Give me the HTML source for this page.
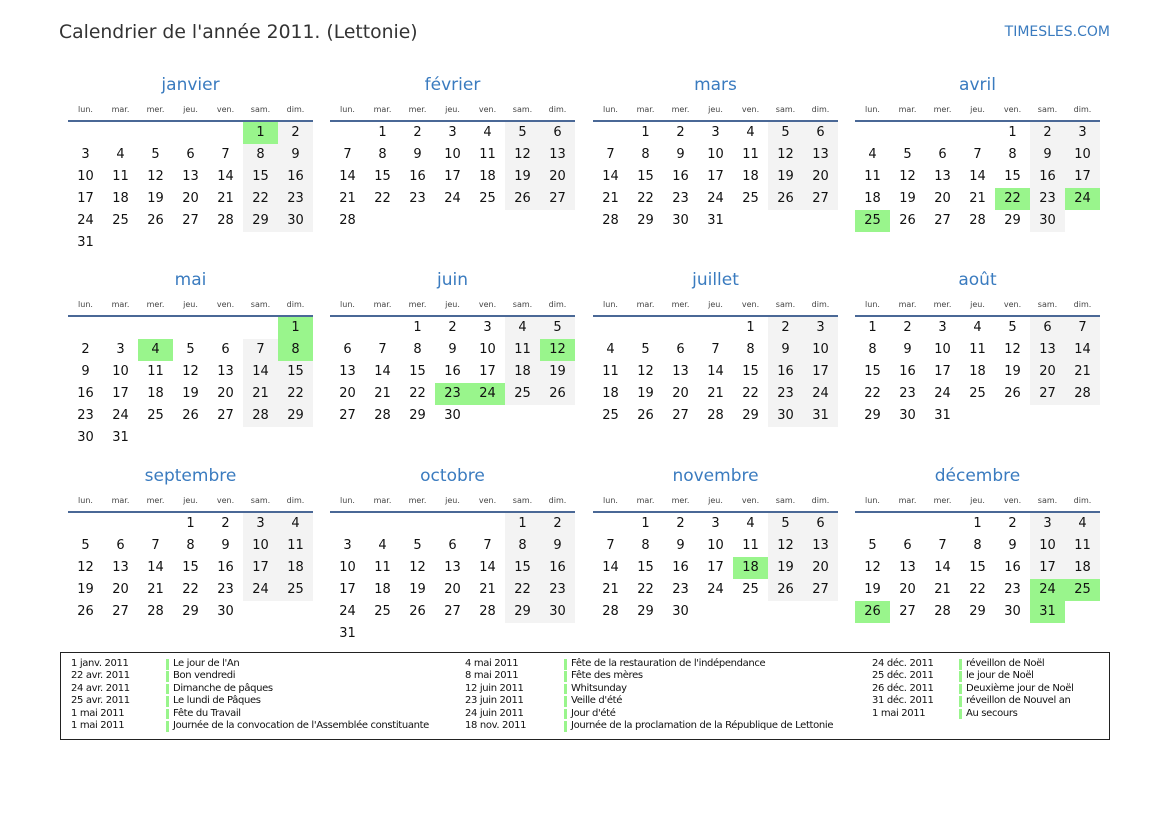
<!DOCTYPE html>
<html><head><meta charset="utf-8"><style>
body{margin:0;width:1169px;height:827px;background:#fff;font-family:"DejaVu Sans","Liberation Sans",sans-serif;position:relative;overflow:hidden;color:#111}
.t{position:absolute;left:59px;top:22px;font-size:18.8px;color:#333}
.s{position:absolute;right:59px;top:24px;font-size:14px;color:#3a7bbf}
.m{position:absolute;width:245px}
.m h2{margin:0;height:27px;line-height:27px;font-size:17px;font-weight:normal;color:#3a7bbf;text-align:center}
table{border-collapse:collapse;table-layout:fixed;width:245px}
td{width:35px;height:22px;padding:0;text-align:center;font-size:13px;line-height:22px}
tr.h td{height:21px;font-size:8px;color:#444;line-height:21px;border-bottom:2px solid #4a6896}
td.w{background:#f3f3f3}
td.g{background:#99f58c}
.lg{position:absolute;left:60px;top:652px;width:1048px;height:86px;border:1px solid #222;font-size:10px;color:#111;letter-spacing:-0.35px}
.c{position:absolute;top:5px;line-height:12.4px;white-space:nowrap}
.b{padding-left:7px}
.b span{position:relative;display:block}
.b span:before{content:"";position:absolute;left:-7px;top:1px;width:3px;height:10.5px;background:#99f58c}
</style></head><body>
<div class="t">Calendrier de l'année 2011. (Lettonie)</div>
<div class="s">TIMESLES.COM</div>

<div class="m" style="left:68px;top:72px"><h2>janvier</h2><table>
<tr class="h"><td>lun.</td><td>mar.</td><td>mer.</td><td>jeu.</td><td>ven.</td><td>sam.</td><td>dim.</td></tr>
<tr><td></td><td></td><td></td><td></td><td></td><td class="g">1</td><td class="w">2</td></tr>
<tr><td>3</td><td>4</td><td>5</td><td>6</td><td>7</td><td class="w">8</td><td class="w">9</td></tr>
<tr><td>10</td><td>11</td><td>12</td><td>13</td><td>14</td><td class="w">15</td><td class="w">16</td></tr>
<tr><td>17</td><td>18</td><td>19</td><td>20</td><td>21</td><td class="w">22</td><td class="w">23</td></tr>
<tr><td>24</td><td>25</td><td>26</td><td>27</td><td>28</td><td class="w">29</td><td class="w">30</td></tr>
<tr><td>31</td><td></td><td></td><td></td><td></td><td></td><td></td></tr></table></div>

<div class="m" style="left:330px;top:72px"><h2>février</h2><table>
<tr class="h"><td>lun.</td><td>mar.</td><td>mer.</td><td>jeu.</td><td>ven.</td><td>sam.</td><td>dim.</td></tr>
<tr><td></td><td>1</td><td>2</td><td>3</td><td>4</td><td class="w">5</td><td class="w">6</td></tr>
<tr><td>7</td><td>8</td><td>9</td><td>10</td><td>11</td><td class="w">12</td><td class="w">13</td></tr>
<tr><td>14</td><td>15</td><td>16</td><td>17</td><td>18</td><td class="w">19</td><td class="w">20</td></tr>
<tr><td>21</td><td>22</td><td>23</td><td>24</td><td>25</td><td class="w">26</td><td class="w">27</td></tr>
<tr><td>28</td><td></td><td></td><td></td><td></td><td></td><td></td></tr></table></div>

<div class="m" style="left:593px;top:72px"><h2>mars</h2><table>
<tr class="h"><td>lun.</td><td>mar.</td><td>mer.</td><td>jeu.</td><td>ven.</td><td>sam.</td><td>dim.</td></tr>
<tr><td></td><td>1</td><td>2</td><td>3</td><td>4</td><td class="w">5</td><td class="w">6</td></tr>
<tr><td>7</td><td>8</td><td>9</td><td>10</td><td>11</td><td class="w">12</td><td class="w">13</td></tr>
<tr><td>14</td><td>15</td><td>16</td><td>17</td><td>18</td><td class="w">19</td><td class="w">20</td></tr>
<tr><td>21</td><td>22</td><td>23</td><td>24</td><td>25</td><td class="w">26</td><td class="w">27</td></tr>
<tr><td>28</td><td>29</td><td>30</td><td>31</td><td></td><td></td><td></td></tr></table></div>

<div class="m" style="left:855px;top:72px"><h2>avril</h2><table>
<tr class="h"><td>lun.</td><td>mar.</td><td>mer.</td><td>jeu.</td><td>ven.</td><td>sam.</td><td>dim.</td></tr>
<tr><td></td><td></td><td></td><td></td><td>1</td><td class="w">2</td><td class="w">3</td></tr>
<tr><td>4</td><td>5</td><td>6</td><td>7</td><td>8</td><td class="w">9</td><td class="w">10</td></tr>
<tr><td>11</td><td>12</td><td>13</td><td>14</td><td>15</td><td class="w">16</td><td class="w">17</td></tr>
<tr><td>18</td><td>19</td><td>20</td><td>21</td><td class="g">22</td><td class="w">23</td><td class="g">24</td></tr>
<tr><td class="g">25</td><td>26</td><td>27</td><td>28</td><td>29</td><td class="w">30</td><td></td></tr></table></div>

<div class="m" style="left:68px;top:267px"><h2>mai</h2><table>
<tr class="h"><td>lun.</td><td>mar.</td><td>mer.</td><td>jeu.</td><td>ven.</td><td>sam.</td><td>dim.</td></tr>
<tr><td></td><td></td><td></td><td></td><td></td><td></td><td class="g">1</td></tr>
<tr><td>2</td><td>3</td><td class="g">4</td><td>5</td><td>6</td><td class="w">7</td><td class="g">8</td></tr>
<tr><td>9</td><td>10</td><td>11</td><td>12</td><td>13</td><td class="w">14</td><td class="w">15</td></tr>
<tr><td>16</td><td>17</td><td>18</td><td>19</td><td>20</td><td class="w">21</td><td class="w">22</td></tr>
<tr><td>23</td><td>24</td><td>25</td><td>26</td><td>27</td><td class="w">28</td><td class="w">29</td></tr>
<tr><td>30</td><td>31</td><td></td><td></td><td></td><td></td><td></td></tr></table></div>

<div class="m" style="left:330px;top:267px"><h2>juin</h2><table>
<tr class="h"><td>lun.</td><td>mar.</td><td>mer.</td><td>jeu.</td><td>ven.</td><td>sam.</td><td>dim.</td></tr>
<tr><td></td><td></td><td>1</td><td>2</td><td>3</td><td class="w">4</td><td class="w">5</td></tr>
<tr><td>6</td><td>7</td><td>8</td><td>9</td><td>10</td><td class="w">11</td><td class="g">12</td></tr>
<tr><td>13</td><td>14</td><td>15</td><td>16</td><td>17</td><td class="w">18</td><td class="w">19</td></tr>
<tr><td>20</td><td>21</td><td>22</td><td class="g">23</td><td class="g">24</td><td class="w">25</td><td class="w">26</td></tr>
<tr><td>27</td><td>28</td><td>29</td><td>30</td><td></td><td></td><td></td></tr></table></div>

<div class="m" style="left:593px;top:267px"><h2>juillet</h2><table>
<tr class="h"><td>lun.</td><td>mar.</td><td>mer.</td><td>jeu.</td><td>ven.</td><td>sam.</td><td>dim.</td></tr>
<tr><td></td><td></td><td></td><td></td><td>1</td><td class="w">2</td><td class="w">3</td></tr>
<tr><td>4</td><td>5</td><td>6</td><td>7</td><td>8</td><td class="w">9</td><td class="w">10</td></tr>
<tr><td>11</td><td>12</td><td>13</td><td>14</td><td>15</td><td class="w">16</td><td class="w">17</td></tr>
<tr><td>18</td><td>19</td><td>20</td><td>21</td><td>22</td><td class="w">23</td><td class="w">24</td></tr>
<tr><td>25</td><td>26</td><td>27</td><td>28</td><td>29</td><td class="w">30</td><td class="w">31</td></tr></table></div>

<div class="m" style="left:855px;top:267px"><h2>août</h2><table>
<tr class="h"><td>lun.</td><td>mar.</td><td>mer.</td><td>jeu.</td><td>ven.</td><td>sam.</td><td>dim.</td></tr>
<tr><td>1</td><td>2</td><td>3</td><td>4</td><td>5</td><td class="w">6</td><td class="w">7</td></tr>
<tr><td>8</td><td>9</td><td>10</td><td>11</td><td>12</td><td class="w">13</td><td class="w">14</td></tr>
<tr><td>15</td><td>16</td><td>17</td><td>18</td><td>19</td><td class="w">20</td><td class="w">21</td></tr>
<tr><td>22</td><td>23</td><td>24</td><td>25</td><td>26</td><td class="w">27</td><td class="w">28</td></tr>
<tr><td>29</td><td>30</td><td>31</td><td></td><td></td><td></td><td></td></tr></table></div>

<div class="m" style="left:68px;top:463px"><h2>septembre</h2><table>
<tr class="h"><td>lun.</td><td>mar.</td><td>mer.</td><td>jeu.</td><td>ven.</td><td>sam.</td><td>dim.</td></tr>
<tr><td></td><td></td><td></td><td>1</td><td>2</td><td class="w">3</td><td class="w">4</td></tr>
<tr><td>5</td><td>6</td><td>7</td><td>8</td><td>9</td><td class="w">10</td><td class="w">11</td></tr>
<tr><td>12</td><td>13</td><td>14</td><td>15</td><td>16</td><td class="w">17</td><td class="w">18</td></tr>
<tr><td>19</td><td>20</td><td>21</td><td>22</td><td>23</td><td class="w">24</td><td class="w">25</td></tr>
<tr><td>26</td><td>27</td><td>28</td><td>29</td><td>30</td><td></td><td></td></tr></table></div>

<div class="m" style="left:330px;top:463px"><h2>octobre</h2><table>
<tr class="h"><td>lun.</td><td>mar.</td><td>mer.</td><td>jeu.</td><td>ven.</td><td>sam.</td><td>dim.</td></tr>
<tr><td></td><td></td><td></td><td></td><td></td><td class="w">1</td><td class="w">2</td></tr>
<tr><td>3</td><td>4</td><td>5</td><td>6</td><td>7</td><td class="w">8</td><td class="w">9</td></tr>
<tr><td>10</td><td>11</td><td>12</td><td>13</td><td>14</td><td class="w">15</td><td class="w">16</td></tr>
<tr><td>17</td><td>18</td><td>19</td><td>20</td><td>21</td><td class="w">22</td><td class="w">23</td></tr>
<tr><td>24</td><td>25</td><td>26</td><td>27</td><td>28</td><td class="w">29</td><td class="w">30</td></tr>
<tr><td>31</td><td></td><td></td><td></td><td></td><td></td><td></td></tr></table></div>

<div class="m" style="left:593px;top:463px"><h2>novembre</h2><table>
<tr class="h"><td>lun.</td><td>mar.</td><td>mer.</td><td>jeu.</td><td>ven.</td><td>sam.</td><td>dim.</td></tr>
<tr><td></td><td>1</td><td>2</td><td>3</td><td>4</td><td class="w">5</td><td class="w">6</td></tr>
<tr><td>7</td><td>8</td><td>9</td><td>10</td><td>11</td><td class="w">12</td><td class="w">13</td></tr>
<tr><td>14</td><td>15</td><td>16</td><td>17</td><td class="g">18</td><td class="w">19</td><td class="w">20</td></tr>
<tr><td>21</td><td>22</td><td>23</td><td>24</td><td>25</td><td class="w">26</td><td class="w">27</td></tr>
<tr><td>28</td><td>29</td><td>30</td><td></td><td></td><td></td><td></td></tr></table></div>

<div class="m" style="left:855px;top:463px"><h2>décembre</h2><table>
<tr class="h"><td>lun.</td><td>mar.</td><td>mer.</td><td>jeu.</td><td>ven.</td><td>sam.</td><td>dim.</td></tr>
<tr><td></td><td></td><td></td><td>1</td><td>2</td><td class="w">3</td><td class="w">4</td></tr>
<tr><td>5</td><td>6</td><td>7</td><td>8</td><td>9</td><td class="w">10</td><td class="w">11</td></tr>
<tr><td>12</td><td>13</td><td>14</td><td>15</td><td>16</td><td class="w">17</td><td class="w">18</td></tr>
<tr><td>19</td><td>20</td><td>21</td><td>22</td><td>23</td><td class="g">24</td><td class="g">25</td></tr>
<tr><td class="g">26</td><td>27</td><td>28</td><td>29</td><td>30</td><td class="g">31</td><td></td></tr></table></div>

<div class="lg">
<div class="c" style="left:10px;top:5px">1 janv. 2011<br>22 avr. 2011<br>24 avr. 2011<br>25 avr. 2011<br>1 mai 2011<br>1 mai 2011</div>
<div class="c b" style="left:105px"><span>Le jour de l'An</span><span>Bon vendredi</span><span>Dimanche de pâques</span><span>Le lundi de Pâques</span><span>Fête du Travail</span><span>Journée de la convocation de l'Assemblée constituante</span></div>
<div class="c" style="left:404px">4 mai 2011<br>8 mai 2011<br>12 juin 2011<br>23 juin 2011<br>24 juin 2011<br>18 nov. 2011</div>
<div class="c b" style="left:503px"><span>Fête de la restauration de l'indépendance</span><span>Fête des mères</span><span>Whitsunday</span><span>Veille d'été</span><span>Jour d'été</span><span>Journée de la proclamation de la République de Lettonie</span></div>
<div class="c" style="left:811px">24 déc. 2011<br>25 déc. 2011<br>26 déc. 2011<br>31 déc. 2011<br>1 mai 2011</div>
<div class="c b" style="left:898px"><span>réveillon de Noël</span><span>le jour de Noël</span><span>Deuxième jour de Noël</span><span>réveillon de Nouvel an</span><span>Au secours</span></div>
</div>
</body></html>
